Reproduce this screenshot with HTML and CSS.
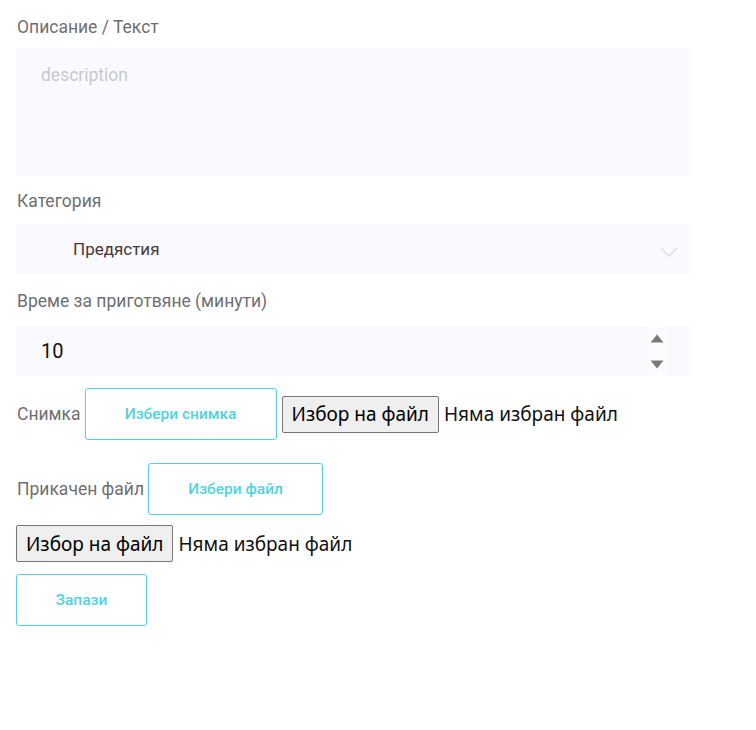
FILE: index.html
```html
<!DOCTYPE html>
<html lang="bg">
<head>
<meta charset="utf-8">
<link rel="stylesheet" href="styles.css">
</head>
<body>
<form class="form">
  <label class="label label-first">Описание / Текст</label>
  <div class="textarea"><span class="placeholder">description</span></div>

  <label class="label">Категория</label>
  <div class="select">
    <span class="select-value">Предястия</span>
    <svg class="chevron" width="18" height="10" viewBox="0 0 18 10"><path d="M1 1 L9 9 L17 1" fill="none" stroke="#dcdcdc" stroke-width="1.2"/></svg>
  </div>

  <label class="label label-time">Време за приготвяне (минути)</label>
  <div class="number">
    <span class="number-value">10</span>
    <div class="spinner">
      <svg width="14" height="9" viewBox="0 0 14 9"><path d="M7 0.5 L13.5 8.5 L0.5 8.5 Z" fill="#7a7a7a"/></svg>
      <svg width="14" height="9" viewBox="0 0 14 9"><path d="M0.5 0.5 L13.5 0.5 L7 8.5 Z" fill="#7a7a7a"/></svg>
    </div>
  </div>

  <div class="row row-photo">
    <span class="row-label">Снимка</span>
    <button type="button" class="outline-btn btn-photo">Избери снимка</button>
    <span class="file">
      <span class="file-btn">Избор на файл</span>
      <span class="file-text">Няма избран файл</span>
    </span>
  </div>

  <div class="row row-attach">
    <span class="row-label">Прикачен файл</span>
    <button type="button" class="outline-btn btn-attach">Избери файл</button>
  </div>

  <div class="file file-block">
    <span class="file-btn">Избор на файл</span>
    <span class="file-text">Няма избран файл</span>
  </div>

  <button type="button" class="outline-btn btn-save">Запази</button>
</form>
</body>
</html>
```

FILE: styles.css
```css
html, body {
  margin: 0;
  padding: 0;
  background: #ffffff;
}

.form {
  display: flex;
  flex-direction: column;
  align-items: flex-start;
  width: 675px;
  padding: 15px 0 0 16px;
  font-family: Roboto, "Liberation Sans", sans-serif;
}

.label {
  display: block;
  font-size: 17.5px;
  line-height: 24px;
  color: #6f6f73;
  margin: 14px 0 11px 1px;
}

.label-first {
  margin-top: 0;
  margin-bottom: 10px;
}

.label-time {
  margin-top: 15px;
  margin-bottom: 13px;
}

.textarea {
  box-sizing: border-box;
  width: 675px;
  height: 126px;
  background: #f9f9fe;
  padding: 15px 25px;
}

.placeholder {
  font-size: 17.5px;
  line-height: 22px;
  color: #c9c9cc;
}

.select {
  box-sizing: border-box;
  width: 675px;
  height: 50px;
  background: #f9f9fe;
  display: flex;
  align-items: center;
  justify-content: space-between;
  padding: 0 13px 0 57px;
}

.select-value {
  font-size: 17px;
  color: #443838;
}

.chevron {
  margin-top: 5px;
}

.number {
  box-sizing: border-box;
  width: 675px;
  height: 50px;
  background: #f9f9fe;
  display: flex;
  align-items: center;
  justify-content: space-between;
  padding: 0 25px 0 25px;
  margin-bottom: 12px;
}

.number-value {
  font-size: 20px;
  color: #111111;
}

.spinner {
  display: flex;
  flex-direction: column;
  justify-content: space-between;
  align-items: center;
  width: 18px;
  height: 50px;
  padding: 8px 0 7px;
  box-sizing: border-box;
  background: #fcfcff;
}

.row {
  display: flex;
  align-items: center;
}

.row-label {
  font-size: 17.5px;
  color: #6f6f73;
  margin-left: 1px;
  margin-right: 4px;
}

.outline-btn {
  box-sizing: border-box;
  background: #ffffff;
  border: 1px solid #4fd3e3;
  border-radius: 3px;
  color: #4fd3e3;
  font-family: Roboto, "Liberation Sans", sans-serif;
  font-weight: 500;
  font-size: 15.5px;
  height: 52px;
  padding: 0;
  cursor: pointer;
}

.btn-photo {
  width: 192px;
}

.btn-attach {
  width: 175px;
}

.row-attach {
  margin-top: 23px;
}

.btn-save {
  width: 131px;
  margin-top: 12px;
}

.file {
  display: flex;
  align-items: center;
  font-family: "Noto Sans", "Open Sans", sans-serif;
  font-size: 19px;
  color: #111111;
}

.row .file {
  margin-left: 5px;
}

.file-block {
  margin-top: 10px;
}

.file-btn {
  box-sizing: border-box;
  height: 37px;
  display: flex;
  align-items: center;
  padding: 0 9px;
  background: #efefef;
  border: 1px solid #767676;
  border-radius: 2px;
  color: #000000;
}

.file-text {
  margin-left: 5px;
}
```
